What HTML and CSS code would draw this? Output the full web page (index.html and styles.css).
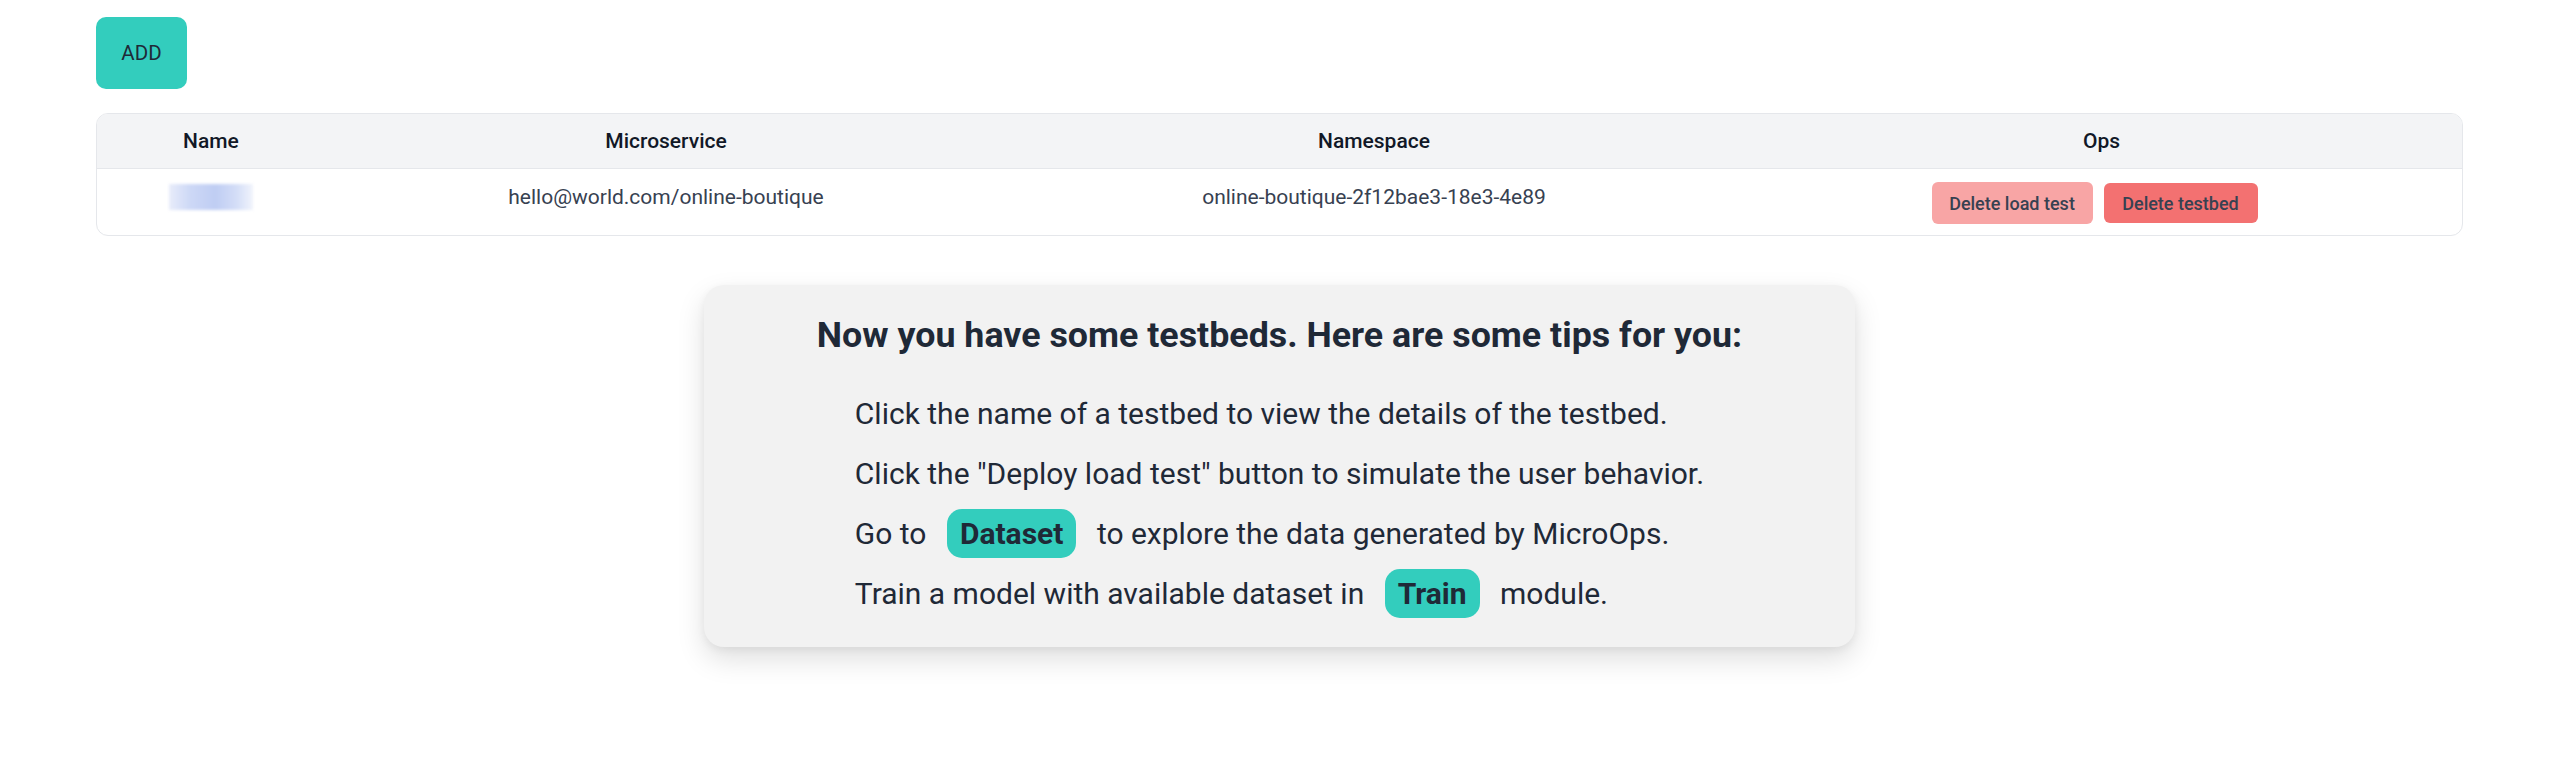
FILE: index.html
```html
<!DOCTYPE html>
<html lang="en">
<head>
<meta charset="utf-8">
<title>Testbeds</title>
<link rel="stylesheet" href="styles.css">
</head>
<body>
<div class="page">
  <div class="toolbar">
    <button class="btn-add">ADD</button>
  </div>

  <div class="table">
    <div class="row head">
      <div class="cell">Name</div>
      <div class="cell">Microservice</div>
      <div class="cell">Namespace</div>
      <div class="cell">Ops</div>
    </div>
    <div class="row body">
      <div class="cell"><span class="blurred" aria-label="testbed name"></span></div>
      <div class="cell">hello@world.com/online-boutique</div>
      <div class="cell">online-boutique-2f12bae3-18e3-4e89</div>
      <div class="cell ops">
        <button class="btn-op light">Delete load test</button>
        <button class="btn-op strong">Delete testbed</button>
      </div>
    </div>
  </div>

  <div class="card">
    <h2 class="card-title">Now you have some testbeds. Here are some tips for you:</h2>
    <div class="tips">
      <p class="tip">Click the name of a testbed to view the details of the testbed.</p>
      <p class="tip">Click the "Deploy load test" button to simulate the user behavior.</p>
      <p class="tip">Go to <span class="pill">Dataset</span> to explore the data generated by MicroOps.</p>
      <p class="tip">Train a model with available dataset in <span class="pill">Train</span> module.</p>
    </div>
  </div>
</div>
</body>
</html>
```

FILE: styles.css
```css
* { box-sizing: border-box; }

html, body {
  margin: 0;
  padding: 0;
  background: #ffffff;
  font-family: Roboto, "Noto Sans", "Liberation Sans", sans-serif;
  color: #1f2937;
}

.page {
  padding: 17px 96px 40px;
}

.toolbar {
  display: flex;
}

.btn-add {
  width: 91px;
  height: 72px;
  border: none;
  border-radius: 10px;
  background: #33cdbd;
  color: #1f2937;
  font-family: Roboto, sans-serif;
  font-size: 20.5px;
  font-weight: 400;
  padding: 0;
}

.table {
  margin-top: 24px;
  border: 1px solid #e5e7eb;
  border-radius: 12px;
  overflow: hidden;
}

.row {
  display: grid;
  grid-template-columns: 228px 682px 734px 1fr;
  align-items: start;
}

.row.head {
  background: #f3f4f6;
  border-bottom: 1px solid #e5e7eb;
  height: 55px;
}

.row.head .cell {
  padding-top: 12px;
  font-size: 21px;
  line-height: 30px;
  font-weight: 500;
  color: #111827;
}

.row.body {
  height: 66px;
}

.row.body .cell {
  padding-top: 13px;
  font-size: 21px;
  line-height: 30px;
  color: #374151;
}

.cell {
  text-align: center;
}

.cell.ops {
  display: flex;
  justify-content: center;
  align-items: center;
  gap: 11px;
  padding-right: 14px;
  height: 55px;
}

.blurred {
  display: inline-block;
  width: 84px;
  height: 26px;
  margin-top: 2px;
  background: linear-gradient(90deg, #e8ecfa 0%, #cdd8f6 25%, #bfcdf3 55%, #d3ddf7 80%, #f1f4fc 100%);
  filter: blur(1.5px);
  vertical-align: top;
}

.btn-op {
  border: none;
  border-radius: 6px;
  font-family: Roboto, sans-serif;
  font-size: 18px;
  font-weight: 500;
  color: #374151;
  padding: 0 12px;
}

.btn-op.light {
  background: #f8a5a5;
  height: 42px;
  width: 161px;
}

.btn-op.strong {
  background: #f37171;
  height: 40px;
  width: 154px;
}

.card {
  width: 1151px;
  margin: 49px auto 0;
  padding: 30px 0 23px;
  background: #f2f2f2;
  border-radius: 20px;
  box-shadow: 0 12px 28px rgba(0, 0, 0, 0.13), 0 3px 8px rgba(0, 0, 0, 0.05);
}

.card-title {
  margin: 0;
  text-align: center;
  font-size: 35.8px;
  line-height: 40px;
  font-weight: 700;
  color: #1f2937;
}

.tips {
  width: fit-content;
  margin: 29px auto 0;
}

.tip {
  margin: 0;
  font-size: 30px;
  line-height: 60px;
  color: #1f2937;
}

.pill {
  background: #33cdbd;
  border-radius: 15px;
  padding: 7px 13px;
  margin: 0 13px;
  font-weight: 700;
}
```
